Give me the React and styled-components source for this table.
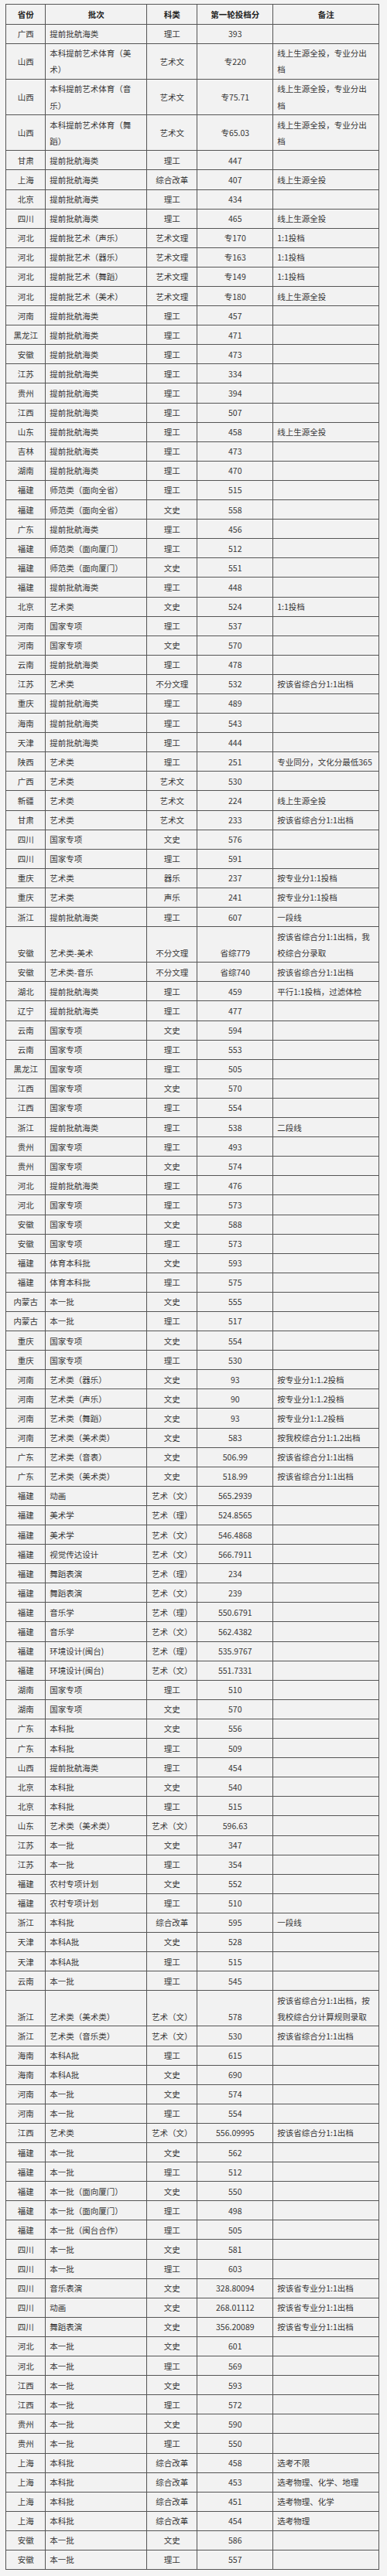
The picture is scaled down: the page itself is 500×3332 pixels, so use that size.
import React from "react";
import styled, { createGlobalStyle } from "styled-components";

const GlobalStyle = createGlobalStyle`
  html, body {
    margin: 0;
    padding: 0;
    background: #f4f4f4;
  }
  body {
    font-family: "Noto Sans CJK SC", "Noto Sans", sans-serif;
    color: #333;
  }
`;

const Page = styled.div`
  padding: 5px 0 6px 7px;
  width: 500px;
  box-sizing: border-box;
`;

const Table = styled.table`
  width: 482px;
  table-layout: fixed;
  border-collapse: collapse;
  border: 1px solid #555;
  background: #f2f2f2;
  font-size: 10.5px;
`;

const HeadCell = styled.th`
  border: 1px solid #555;
  padding: 1.8px 4px;
  line-height: 21.1px;
  font-weight: 700;
  color: #222;
  text-align: center;
  vertical-align: middle;
`;

const Cell = styled.td`
  border: 1px solid #555;
  padding: 1.5px ${(p) => (p.$align === "left" ? "6px 1.5px 5px" : "3px")};
  line-height: 21.1px;
  font-weight: 400;
  color: #363636;
  text-align: ${(p) => p.$align || "center"};
  vertical-align: ${(p) => p.$valign || "middle"};
  word-break: break-all;
`;

const rows = [
  ["广西", "提前批航海类", "理工", "393", ""],
  ["山西", "本科提前艺术体育（美术）", "艺术文", "专220", "线上生源全投，专业分出档"],
  ["山西", "本科提前艺术体育（音乐）", "艺术文", "专75.71", "线上生源全投，专业分出档"],
  ["山西", "本科提前艺术体育（舞蹈）", "艺术文", "专65.03", "线上生源全投，专业分出档"],
  ["甘肃", "提前批航海类", "理工", "447", ""],
  ["上海", "提前批航海类", "综合改革", "407", "线上生源全投"],
  ["北京", "提前批航海类", "理工", "434", ""],
  ["四川", "提前批航海类", "理工", "465", "线上生源全投"],
  ["河北", "提前批艺术（声乐）", "艺术文理", "专170", "1:1投档"],
  ["河北", "提前批艺术（器乐）", "艺术文理", "专163", "1:1投档"],
  ["河北", "提前批艺术（舞蹈）", "艺术文理", "专149", "1:1投档"],
  ["河北", "提前批艺术（美术）", "艺术文理", "专180", "线上生源全投"],
  ["河南", "提前批航海类", "理工", "457", ""],
  ["黑龙江", "提前批航海类", "理工", "471", ""],
  ["安徽", "提前批航海类", "理工", "473", ""],
  ["江苏", "提前批航海类", "理工", "334", ""],
  ["贵州", "提前批航海类", "理工", "394", ""],
  ["江西", "提前批航海类", "理工", "507", ""],
  ["山东", "提前批航海类", "理工", "458", "线上生源全投"],
  ["吉林", "提前批航海类", "理工", "473", ""],
  ["湖南", "提前批航海类", "理工", "470", ""],
  ["福建", "师范类（面向全省）", "理工", "515", ""],
  ["福建", "师范类（面向全省）", "文史", "558", ""],
  ["广东", "提前批航海类", "理工", "456", ""],
  ["福建", "师范类（面向厦门）", "理工", "512", ""],
  ["福建", "师范类（面向厦门）", "文史", "551", ""],
  ["福建", "提前批航海类", "理工", "448", ""],
  ["北京", "艺术类", "文史", "524", "1:1投档"],
  ["河南", "国家专项", "理工", "537", ""],
  ["河南", "国家专项", "文史", "570", ""],
  ["云南", "提前批航海类", "理工", "478", ""],
  ["江苏", "艺术类", "不分文理", "532", "按该省综合分1:1出档"],
  ["重庆", "提前批航海类", "理工", "489", ""],
  ["海南", "提前批航海类", "理工", "543", ""],
  ["天津", "提前批航海类", "理工", "444", ""],
  ["陕西", "艺术类", "理工", "251", "专业同分，文化分最低365"],
  ["广西", "艺术类", "艺术文", "530", ""],
  ["新疆", "艺术类", "艺术文", "224", "线上生源全投"],
  ["甘肃", "艺术类", "艺术文", "233", "按该省综合分1:1出档"],
  ["四川", "国家专项", "文史", "576", ""],
  ["四川", "国家专项", "理工", "591", ""],
  ["重庆", "艺术类", "器乐", "237", "按专业分1:1投档"],
  ["重庆", "艺术类", "声乐", "241", "按专业分1:1投档"],
  ["浙江", "提前批航海类", "理工", "607", "一段线"],
  ["安徽", "艺术类-美术", "不分文理", "省综779", "按该省综合分1:1出档，我校综合分录取", "bottom"],
  ["安徽", "艺术类-音乐", "不分文理", "省综740", "按该省综合分1:1出档"],
  ["湖北", "提前批航海类", "理工", "459", "平行1:1投档，过滤体检"],
  ["辽宁", "提前批航海类", "理工", "477", ""],
  ["云南", "国家专项", "文史", "594", ""],
  ["云南", "国家专项", "理工", "553", ""],
  ["黑龙江", "国家专项", "理工", "505", ""],
  ["江西", "国家专项", "文史", "570", ""],
  ["江西", "国家专项", "理工", "554", ""],
  ["浙江", "提前批航海类", "理工", "538", "二段线"],
  ["贵州", "国家专项", "理工", "493", ""],
  ["贵州", "国家专项", "文史", "574", ""],
  ["河北", "提前批航海类", "理工", "476", ""],
  ["河北", "国家专项", "理工", "573", ""],
  ["安徽", "国家专项", "文史", "588", ""],
  ["安徽", "国家专项", "理工", "573", ""],
  ["福建", "体育本科批", "文史", "593", ""],
  ["福建", "体育本科批", "理工", "575", ""],
  ["内蒙古", "本一批", "文史", "555", ""],
  ["内蒙古", "本一批", "理工", "517", ""],
  ["重庆", "国家专项", "文史", "554", ""],
  ["重庆", "国家专项", "理工", "530", ""],
  ["河南", "艺术类（器乐）", "文史", "93", "按专业分1:1.2投档"],
  ["河南", "艺术类（声乐）", "文史", "90", "按专业分1:1.2投档"],
  ["河南", "艺术类（舞蹈）", "文史", "93", "按专业分1:1.2投档"],
  ["河南", "艺术类（美术类）", "文史", "583", "按我校综合分1:1.2出档"],
  ["广东", "艺术类（音表）", "文史", "506.99", "按该省综合分1:1出档"],
  ["广东", "艺术类（美术类）", "文史", "518.99", "按该省综合分1:1出档"],
  ["福建", "动画", "艺术（文）", "565.2939", ""],
  ["福建", "美术学", "艺术（理）", "524.8565", ""],
  ["福建", "美术学", "艺术（文）", "546.4868", ""],
  ["福建", "视觉传达设计", "艺术（文）", "566.7911", ""],
  ["福建", "舞蹈表演", "艺术（理）", "234", ""],
  ["福建", "舞蹈表演", "艺术（文）", "239", ""],
  ["福建", "音乐学", "艺术（理）", "550.6791", ""],
  ["福建", "音乐学", "艺术（文）", "562.4382", ""],
  ["福建", "环境设计(闽台)", "艺术（理）", "535.9767", ""],
  ["福建", "环境设计(闽台)", "艺术（文）", "551.7331", ""],
  ["湖南", "国家专项", "理工", "510", ""],
  ["湖南", "国家专项", "文史", "570", ""],
  ["广东", "本科批", "文史", "556", ""],
  ["广东", "本科批", "理工", "509", ""],
  ["山西", "提前批航海类", "理工", "454", ""],
  ["北京", "本科批", "文史", "540", ""],
  ["北京", "本科批", "理工", "515", ""],
  ["山东", "艺术类（美术类）", "艺术（文）", "596.63", ""],
  ["江苏", "本一批", "文史", "347", ""],
  ["江苏", "本一批", "理工", "354", ""],
  ["福建", "农村专项计划", "文史", "552", ""],
  ["福建", "农村专项计划", "理工", "510", ""],
  ["浙江", "本科批", "综合改革", "595", "一段线"],
  ["天津", "本科A批", "文史", "528", ""],
  ["天津", "本科A批", "理工", "515", ""],
  ["云南", "本一批", "理工", "545", ""],
  ["浙江", "艺术类（美术类）", "艺术（文）", "578", "按该省综合分1:1出档，按我校综合分计算规则录取", "bottom"],
  ["浙江", "艺术类（音乐类）", "艺术（文）", "530", "按该省综合分1:1出档"],
  ["海南", "本科A批", "理工", "615", ""],
  ["海南", "本科A批", "文史", "690", ""],
  ["河南", "本一批", "文史", "574", ""],
  ["河南", "本一批", "理工", "554", ""],
  ["江西", "艺术类", "艺术（文）", "556.09995", "按该省综合分1:1出档"],
  ["福建", "本一批", "文史", "562", ""],
  ["福建", "本一批", "理工", "512", ""],
  ["福建", "本一批（面向厦门）", "文史", "550", ""],
  ["福建", "本一批（面向厦门）", "理工", "498", ""],
  ["福建", "本一批（闽台合作）", "理工", "505", ""],
  ["四川", "本一批", "文史", "581", ""],
  ["四川", "本一批", "理工", "603", ""],
  ["四川", "音乐表演", "文史", "328.80094", "按该省专业分1:1出档"],
  ["四川", "动画", "文史", "268.01112", "按该省专业分1:1出档"],
  ["四川", "舞蹈表演", "文史", "356.20089", "按该省专业分1:1出档"],
  ["河北", "本一批", "文史", "601", ""],
  ["河北", "本一批", "理工", "569", ""],
  ["江西", "本一批", "文史", "593", ""],
  ["江西", "本一批", "理工", "572", ""],
  ["贵州", "本一批", "文史", "590", ""],
  ["贵州", "本一批", "理工", "550", ""],
  ["上海", "本科批", "综合改革", "458", "选考不限"],
  ["上海", "本科批", "综合改革", "453", "选考物理、化学、地理"],
  ["上海", "本科批", "综合改革", "451", "选考物理、化学"],
  ["上海", "本科批", "综合改革", "454", "选考物理"],
  ["安徽", "本一批", "文史", "586", ""],
  ["安徽", "本一批", "理工", "557", ""],
];

const columns = [
  { title: "省份", width: 51.3, align: "center" },
  { title: "批次", width: 131, align: "left" },
  { title: "科类", width: 65, align: "center" },
  { title: "第一轮投档分", width: 98, align: "center" },
  { title: "备注", width: 136.7, align: "left" },
];

export default function App() {
  return (
    <>
      <GlobalStyle />
      <Page>
        <Table>
          <colgroup>
            {columns.map((c) => (
              <col key={c.title} style={{ width: `${c.width}px` }} />
            ))}
          </colgroup>
          <thead>
            <tr>
              {columns.map((c) => (
                <HeadCell key={c.title}>{c.title}</HeadCell>
              ))}
            </tr>
          </thead>
          <tbody>
            {rows.map((r, i) => (
              <tr key={i}>
                {r.slice(0, 5).map((v, j) => (
                  <Cell key={j} $align={columns[j].align} $valign={r[5]}>
                    {v}
                  </Cell>
                ))}
              </tr>
            ))}
          </tbody>
        </Table>
      </Page>
    </>
  );
}
